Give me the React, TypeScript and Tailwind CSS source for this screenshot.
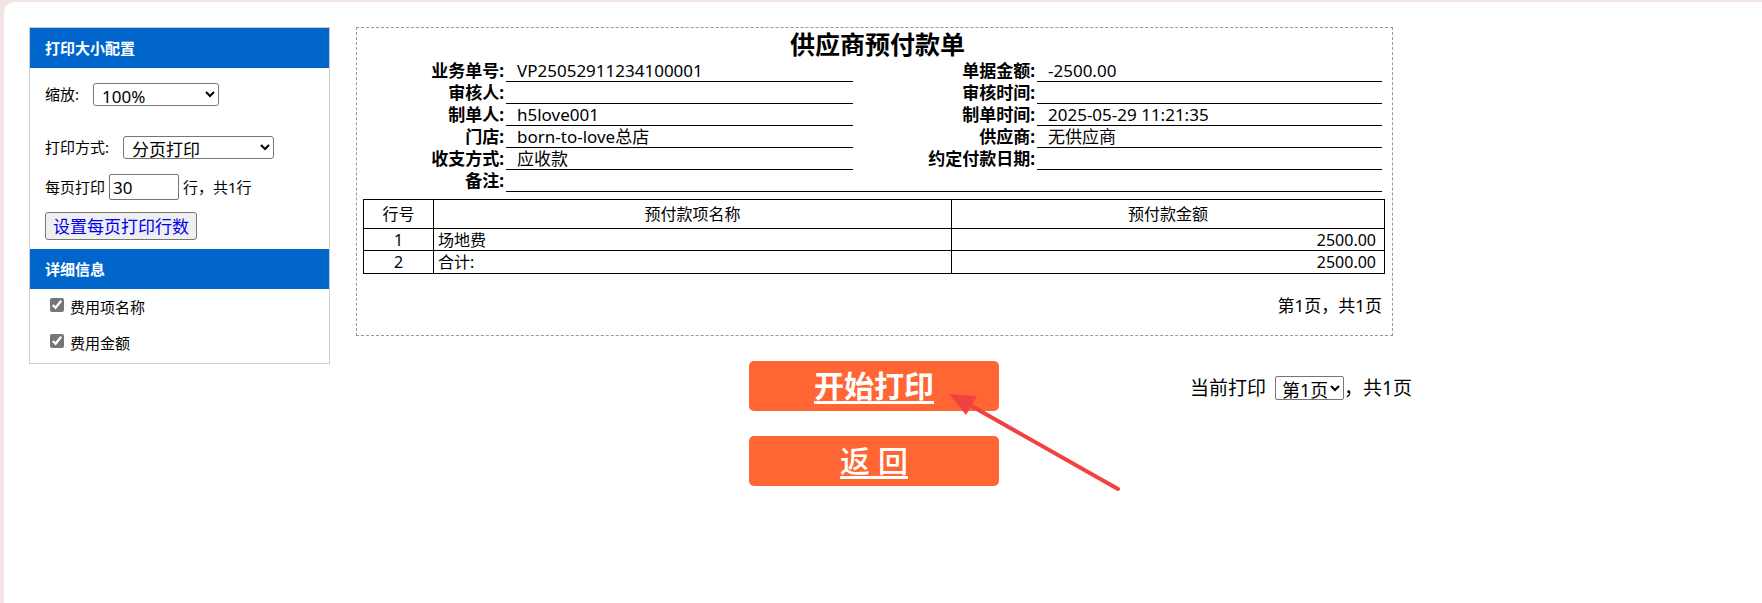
import React from "react"

const FONT = { fontFamily: '"Noto Sans", "Noto Sans CJK SC", sans-serif' }

const FIELDS = [
  { label: "业务单号:", value: "VP25052911234100001", rLabel: "单据金额:", rValue: "-2500.00" },
  { label: "审核人:", value: "", rLabel: "审核时间:", rValue: "" },
  { label: "制单人:", value: "h5love001", rLabel: "制单时间:", rValue: "2025-05-29 11:21:35" },
  { label: "门店:", value: "born-to-love总店", rLabel: "供应商:", rValue: "无供应商" },
  { label: "收支方式:", value: "应收款", rLabel: "约定付款日期:", rValue: "" },
]

const ROWS = [
  { no: "1", name: "场地费", amount: "2500.00", h: "h-[22px]" },
  { no: "2", name: "合计:", amount: "2500.00", h: "h-[23px]" },
]

function SidePanel() {
  return (
    <div className="w-[301px] h-[337px] shrink-0 border border-[#cccccc] text-[15px] text-black">
      <div className="h-[40px] bg-[#0066cc] text-white font-bold flex items-center pl-[15px]">打印大小配置</div>
      <div className="pl-[15px]">
        <div className="flex items-center mt-[15px] h-[22px]">
          <span>缩放:</span>
          <select className="ml-[14px] w-[126px] h-[23px] border border-[#767676] rounded-[3px] text-[17px] pl-[4px] leading-none">
            <option>100%</option>
          </select>
        </div>
        <div className="flex items-center mt-[31px] h-[22px]">
          <span>打印方式:</span>
          <select className="ml-[14px] w-[151px] h-[23px] border border-[#767676] rounded-[3px] text-[17px] pl-[4px] leading-none">
            <option>分页打印</option>
          </select>
        </div>
        <div className="flex items-center mt-[16px] h-[26px]">
          <span>每页打印</span>
          <input
            defaultValue="30"
            className="ml-[4px] w-[70px] h-[26px] border border-[#767676] rounded-[2px] text-[17px] pl-[3px]"
          />
          <span className="ml-[4px]">行，共1行</span>
        </div>
        <button className="mt-[12px] h-[28px] w-[152px] bg-[#efefef] border border-[#767676] rounded-[3px] text-[17px] text-[#0000ee] leading-none">
          设置每页打印行数
        </button>
      </div>
      <div className="mt-[9px] h-[40px] bg-[#0066cc] text-white font-bold flex items-center pl-[15px]">详细信息</div>
      <div className="pl-[20px]">
        <label className="flex items-center mt-[9px] h-[14px] gap-[6px]">
          <input type="checkbox" defaultChecked className="w-[14px] h-[14px] m-0 accent-[#767676]" />
          <span className="mt-[4px]">费用项名称</span>
        </label>
        <label className="flex items-center mt-[22px] h-[14px] gap-[6px]">
          <input type="checkbox" defaultChecked className="w-[14px] h-[14px] m-0 accent-[#767676]" />
          <span className="mt-[4px]">费用金额</span>
        </label>
      </div>
    </div>
  )
}

function Preview() {
  return (
    <div className="w-[1037px] h-[309px] border border-dashed border-[#999999] pl-[6px] text-black">
      <div className="text-center text-[25px] font-bold leading-[32px]">供应商预付款单</div>
      <div className="grid grid-cols-[143px_347px_184px_345px] text-[17px] leading-[22px]">
        {FIELDS.map((f) => (
          <React.Fragment key={f.label}>
            <div className="text-right font-bold pr-[2px] whitespace-nowrap">{f.label}</div>
            <div className="border-b border-black pl-[11px] h-[22px] whitespace-nowrap">{f.value}</div>
            <div className="text-right font-bold pr-[2px] whitespace-nowrap">{f.rLabel}</div>
            <div className="border-b border-black pl-[11px] h-[22px] whitespace-nowrap">{f.rValue}</div>
          </React.Fragment>
        ))}
        <div className="text-right font-bold pr-[2px]">备注:</div>
        <div className="col-span-3 border-b border-black h-[22px]" />
      </div>
      <table className="mt-[7px] w-[1022px] border-collapse border border-black text-[16px] leading-[20px]">
        <thead>
          <tr className="h-[29px]">
            <th className="w-[70px] border border-black font-normal">行号</th>
            <th className="w-[518px] border border-black font-normal">预付款项名称</th>
            <th className="border border-black font-normal">预付款金额</th>
          </tr>
        </thead>
        <tbody>
          {ROWS.map((r) => (
            <tr key={r.no} className={r.h}>
              <td className="border border-black text-center">{r.no}</td>
              <td className="border border-black pl-[4px]">{r.name}</td>
              <td className="border border-black text-right pr-[8px]">{r.amount}</td>
            </tr>
          ))}
        </tbody>
      </table>
      <div className="text-right text-[17px] pr-[10px] mt-[21px] leading-[22px]">第1页，共1页</div>
    </div>
  )
}

export default function App() {
  return (
    <div className="min-h-screen bg-[#f3e5e4] pt-[2px] pl-[4px]" style={FONT}>
      <div className="relative bg-white rounded-tl-[10px] min-h-[601px] flex items-start pt-[25px] pl-[25px]">
        <SidePanel />
        <div className="ml-[26px]">
          <Preview />
          <div className="flex items-start mt-[25px]">
            <div className="ml-[393px] flex flex-col gap-[25px]">
              <button className="w-[250px] h-[50px] bg-[#ff6633] rounded-[5px] text-white text-[30px] font-bold underline underline-offset-[4px] leading-none">
                开始打印
              </button>
              <button className="w-[250px] h-[50px] bg-[#ff6633] rounded-[5px] text-white text-[30px] font-medium underline underline-offset-[4px] leading-none">
                返 回
              </button>
            </div>
            <div className="ml-[191px] mt-[15px] flex items-center text-[19px] leading-[24px]">
              <span>当前打印</span>
              <select className="ml-[9px] w-[69px] h-[24px] border border-[#767676] rounded-[2px] text-[18px] pl-[2px] leading-none">
                <option>第1页</option>
              </select>
              <span>，共1页</span>
            </div>
          </div>
        </div>
        <svg className="absolute left-[936px] top-[383px]" width="185" height="110" viewBox="0 0 185 110">
          <line x1="178" y1="104" x2="28" y2="19" stroke="#f24141" strokeWidth="4" strokeLinecap="round" />
          <polygon points="9,9 37,11 26,30" fill="#f24141" />
        </svg>
      </div>
    </div>
  )
}
